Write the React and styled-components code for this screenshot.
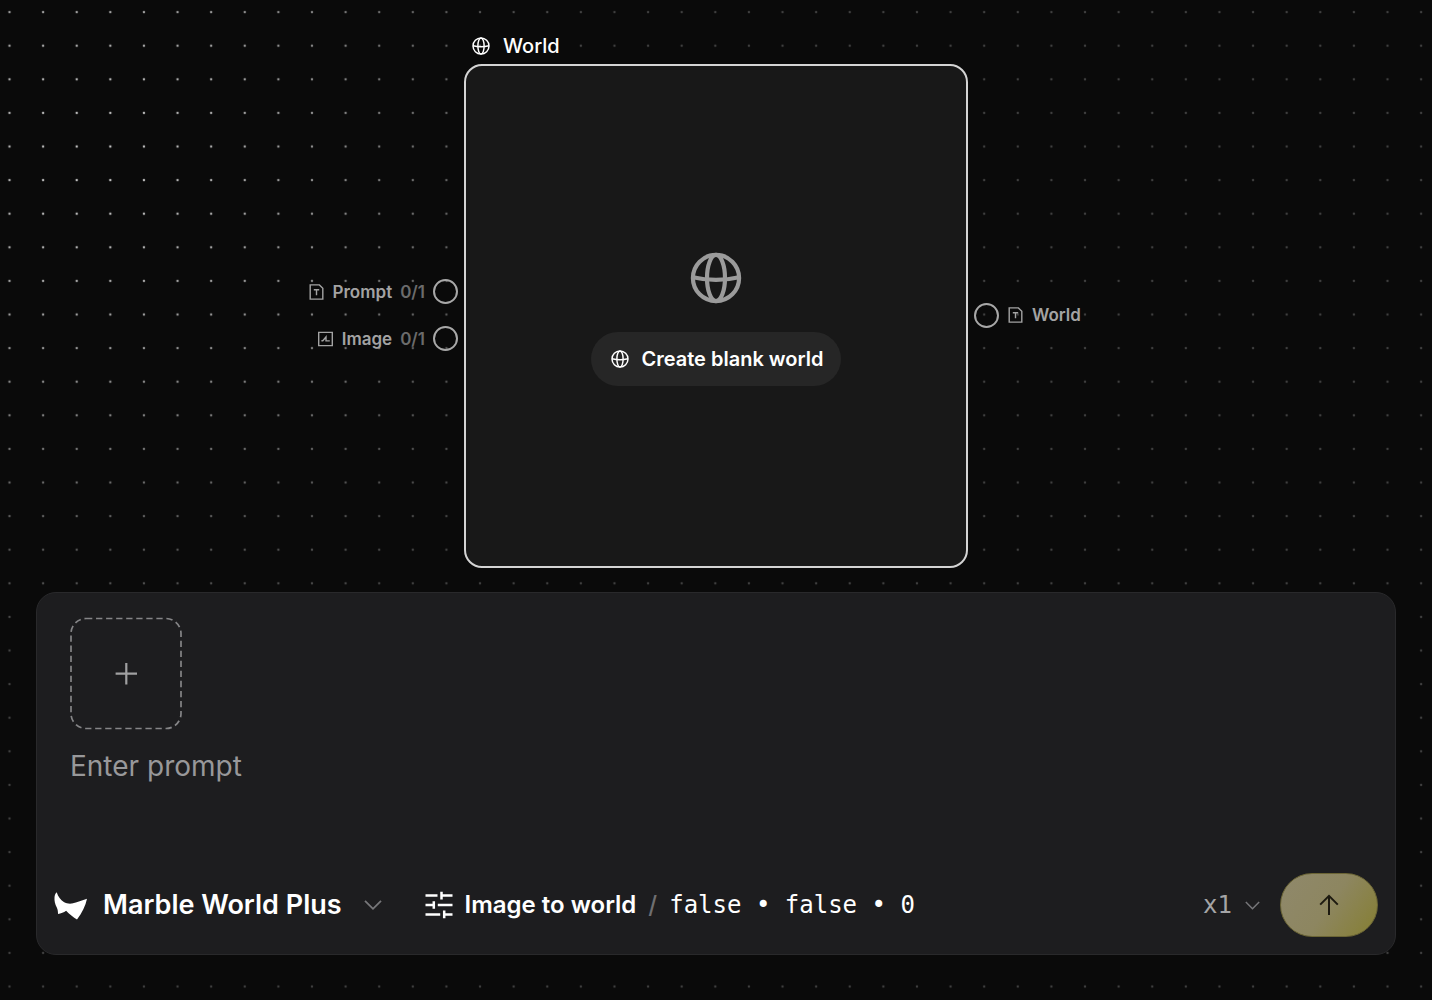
import React from "react";
import styled, { createGlobalStyle } from "styled-components";

const GlobalStyle = createGlobalStyle`
  * {
    box-sizing: border-box;
  }

  body {
    margin: 0;
    background: #0a0a0a;
    color: #fff;
    font-family: "Inter", "Liberation Sans", sans-serif;
  }

  button,
  select,
  textarea {
    margin: 0;
    padding: 0;
    border: 0;
    background: none;
    color: inherit;
    font-family: inherit;
  }

  button,
  select {
    cursor: pointer;
  }

  svg {
    display: block;
    flex: none;
  }
`;

const Page = styled.main`
  display: flex;
  flex-direction: column;
  justify-content: space-between;
  gap: 24px;
  min-height: 100vh;
  padding: 32px 36px 45px;
  position: relative;
  isolation: isolate;
`;

const Backdrop = styled.svg`
  height: 100%;
  inset: 0;
  position: absolute;
  width: 100%;
  z-index: -1;
`;

const Graph = styled.section`
  display: grid;
  grid-template-columns: 1fr auto 1fr;
  column-gap: 6px;
`;

const NodeTitle = styled.h2`
  align-items: center;
  display: flex;
  font-size: 20px;
  font-weight: 500;
  gap: 13px;
  grid-column: 2;
  line-height: 28px;
  margin: 0;
  padding: 0 8px 4px;

  & span {
    background: #0a0a0a;
  }
`;

const NodeCard = styled.div`
  align-items: center;
  aspect-ratio: 1;
  background: #181818;
  border: 2px solid #d4d4d4;
  border-radius: 18px;
  color: #9b9b9b;
  display: flex;
  flex-direction: column;
  gap: 28px;
  grid-column: 2;
  grid-row: 2;
  justify-content: center;
  padding-top: 6px;
  width: 504px;
`;

const BlankButton = styled.button`
  align-items: center;
  background: #262626;
  border-radius: 27px;
  color: #fff;
  display: flex;
  font-size: 20px;
  font-weight: 600;
  gap: 13px;
  height: 54px;
  padding: 0 18px 0 20px;
`;

const Ports = styled.ul`
  align-items: ${(props) => (props.$side === "left" ? "flex-end" : "flex-start")};
  display: flex;
  flex-direction: column;
  gap: 21px;
  grid-column: ${(props) => (props.$side === "left" ? 1 : 3)};
  grid-row: 2;
  justify-content: center;
  list-style: none;
  margin: 0;
  padding: 0 0 2px;
`;

const Port = styled.li`
  align-items: center;
  color: #a3a3a3;
  display: flex;
  font-size: 17px;
  font-weight: 600;
  gap: 8px;
  line-height: 26px;

  & svg {
    margin: 0 1px;
  }
`;

const PortCount = styled.span`
  color: #6b6b6b;
`;

const PortHandle = styled.button`
  border: 2px solid #a8a8a8;
  border-radius: 50%;
  height: 25px;
  width: 25px;
`;

const Composer = styled.form`
  background: #1d1d1f;
  border: 1px solid #29292b;
  border-radius: 20px;
  display: flex;
  flex-direction: column;
  padding: 24px 17px 17px;
`;

const AddButton = styled.button`
  align-self: flex-start;
  color: #a0a0a1;
  height: 114px;
  margin-left: 15px;
  width: 114px;
`;

const PromptInput = styled.textarea`
  display: block;
  font-size: 28px;
  height: 125px;
  line-height: 36px;
  margin: 17px 16px 0;
  outline: none;
  resize: none;

  &::placeholder {
    color: #98989a;
    opacity: 1;
  }
`;

const Toolbar = styled.div`
  align-items: center;
  display: flex;
  min-height: 64px;
`;

const Picker = styled.label`
  align-items: center;
  display: flex;
  gap: 15px;
  margin-left: ${(props) => (props.$end ? "auto" : 0)};
`;

const SelectBox = styled.span`
  align-items: center;
  color: #77777a;
  display: grid;

  & > * {
    grid-area: 1 / 1;
  }

  & > svg {
    justify-self: end;
    pointer-events: none;
  }
`;

const Select = styled.select`
  appearance: none;
  color: #fff;
  field-sizing: content;
  font-size: 27px;
  font-weight: 600;
  line-height: 36px;
  padding-right: 40px;
`;

const CountSelect = styled(Select)`
  color: #a5a5a7;
  font-family: "DejaVu Sans Mono", monospace;
  font-size: 24px;
  font-weight: 400;
  padding-right: 28px;
`;

const SettingsButton = styled.button`
  align-items: center;
  color: #fff;
  display: flex;
  font-size: 24px;
  font-weight: 600;
  gap: 12px;
  line-height: 36px;
  margin-left: 43px;
`;

const Slash = styled.span`
  color: #6f6f71;
  font-weight: 500;
`;

const Values = styled.span`
  font-family: "DejaVu Sans Mono", monospace;
  font-size: 24px;
  font-weight: 400;
`;

const SendButton = styled.button`
  align-items: center;
  background: linear-gradient(125deg, #8f8869 10%, #8d8660 50%, #87803b 90%);
  border: 1px solid #6b6535;
  border-radius: 32px;
  color: #1d1a10;
  display: flex;
  height: 64px;
  justify-content: center;
  margin-left: 20px;
  width: 98px;
`;

const DotGrid = () => (
  <Backdrop aria-hidden="true">
    <defs>
      <pattern id="dots" width="33.61" height="33.6" x="-7.3" y="-4.7" patternUnits="userSpaceOnUse">
        <circle cx="16.8" cy="16.8" r="1.25" fill="#fff" />
      </pattern>
      <radialGradient id="glow" gradientUnits="userSpaceOnUse" cx="100" cy="160" r="520">
        <stop offset="0" stopColor="#fff" stopOpacity="0.78" />
        <stop offset="0.35" stopColor="#fff" stopOpacity="0.58" />
        <stop offset="0.75" stopColor="#fff" stopOpacity="0.3" />
        <stop offset="1" stopColor="#fff" stopOpacity="0.22" />
      </radialGradient>
      <mask id="fade">
        <rect width="100%" height="100%" fill="url(#glow)" />
      </mask>
    </defs>
    <rect width="100%" height="100%" fill="url(#dots)" mask="url(#fade)" />
  </Backdrop>
);

const GlobeIcon = ({ size }) => (
  <svg width={size} height={size} viewBox="0 0 52 52" fill="none" stroke="currentColor" strokeWidth="4.2">
    <circle cx="26" cy="26" r="23.1" />
    <ellipse cx="26" cy="26" rx="9" ry="23.1" />
    <path d="M2.9 25.2Q26 30.6 49.1 25.2" />
  </svg>
);

const TextIcon = () => (
  <svg width="15" height="16" viewBox="0 0 15 16" fill="none" stroke="currentColor" strokeWidth="1.4">
    <path d="M1.2 .9H10.4L13.8 4.2V15.1H1.2Z" />
    <path d="M4.8 5.7H10.2M7.5 5.7V11.2" />
  </svg>
);

const ImageIcon = () => (
  <svg width="15" height="16" viewBox="0 0 15 16" fill="none" stroke="currentColor" strokeWidth="1.4">
    <path d="M.7 1.4H14.3V14.6H.7Z" />
    <path d="M3.4 9.8H4.8L8 6V9.9H11.8" />
  </svg>
);

const ChevronIcon = ({ size }) => (
  <svg width={size} height={size} viewBox="0 0 18 18" fill="none" stroke="currentColor" strokeWidth="1.8">
    <path d="M1 4.8L9 12.8L17 4.8" />
  </svg>
);

const MarbleLogo = () => (
  <svg width="34" height="30" viewBox="0 -2 34 30" fill="currentColor">
    <path d="M2.7.3C4.2 4.8 6.6 8 9.8 10C12.2 11.4 15.2 11.9 18 11.5C23.3 10.7 28.2 8.2 33 6.8C31.6 13.6 28 21.2 23 27.4C19.4 25.4 15.2 22.3 12.1 18.8C9.7 20.5 7 21.5 4 21.9C4 19.8 3.8 17.8 2.9 15.8C.9 12 .3 9.3.5 5.6C.6 3.4 1.3 1.7 2.7.3Z" />
  </svg>
);

const SlidersIcon = () => (
  <svg width="28" height="28" viewBox="0 0 28 28" fill="none" stroke="currentColor" strokeWidth="2.5">
    <path d="M.5 4.6H12.5M16.5 4.6H27.5M16.5.8V8.4" />
    <path d="M.5 14H8.8M8.8 10.2V17.8M12.8 14H27.5" />
    <path d="M.5 23.4H15.2M19.2 23.4H27.5M19.2 19.6V27.2" />
  </svg>
);

const AddIcon = () => (
  <svg width="114" height="114" viewBox="0 0 114 114" fill="none" stroke="currentColor">
    <rect x="2" y="1.5" width="110" height="110" rx="15" stroke="#858587" strokeWidth="1.7" strokeDasharray="6.3 3.75" />
    <path d="M57.3 46V67.4M46.6 56.7H68" strokeWidth="2.2" />
  </svg>
);

const ArrowIcon = () => (
  <svg width="22" height="22" viewBox="0 0 22 22" fill="none" stroke="currentColor" strokeWidth="2">
    <path d="M11 21V1.8M2.2 10.6L11 1.8L19.8 10.6" />
  </svg>
);

const App = () => {
  return (
    <>
      <GlobalStyle />
      <Page>
        <DotGrid />
        <Graph>
          <NodeTitle>
            <GlobeIcon size={18} />
            <span>World</span>
          </NodeTitle>
          <Ports $side="left">
            <Port>
              <TextIcon />
              <span>Prompt</span>
              <PortCount>0/1</PortCount>
              <PortHandle aria-label="Connect prompt" />
            </Port>
            <Port>
              <ImageIcon />
              <span>Image</span>
              <PortCount>0/1</PortCount>
              <PortHandle aria-label="Connect image" />
            </Port>
          </Ports>
          <NodeCard>
            <GlobeIcon size={52} />
            <BlankButton type="button">
              <GlobeIcon size={18} />
              Create blank world
            </BlankButton>
          </NodeCard>
          <Ports $side="right">
            <Port>
              <PortHandle aria-label="Connect world" />
              <TextIcon />
              <span>World</span>
            </Port>
          </Ports>
        </Graph>
        <Composer onSubmit={(event) => event.preventDefault()}>
          <AddButton type="button" aria-label="Add reference">
            <AddIcon />
          </AddButton>
          <PromptInput aria-label="Prompt" placeholder="Enter prompt" />
          <Toolbar>
            <Picker>
              <MarbleLogo />
              <SelectBox>
                <Select aria-label="Model">
                  <option>Marble World Plus</option>
                </Select>
                <ChevronIcon size={18} />
              </SelectBox>
            </Picker>
            <SettingsButton type="button">
              <SlidersIcon />
              <span>Image to world</span>
              <Slash>/</Slash>
              <Values>false • false • 0</Values>
            </SettingsButton>
            <Picker $end>
              <SelectBox>
                <CountSelect aria-label="Count">
                  <option>x1</option>
                </CountSelect>
                <ChevronIcon size={15} />
              </SelectBox>
            </Picker>
            <SendButton type="submit" aria-label="Generate">
              <ArrowIcon />
            </SendButton>
          </Toolbar>
        </Composer>
      </Page>
    </>
  );
};

export default App;
